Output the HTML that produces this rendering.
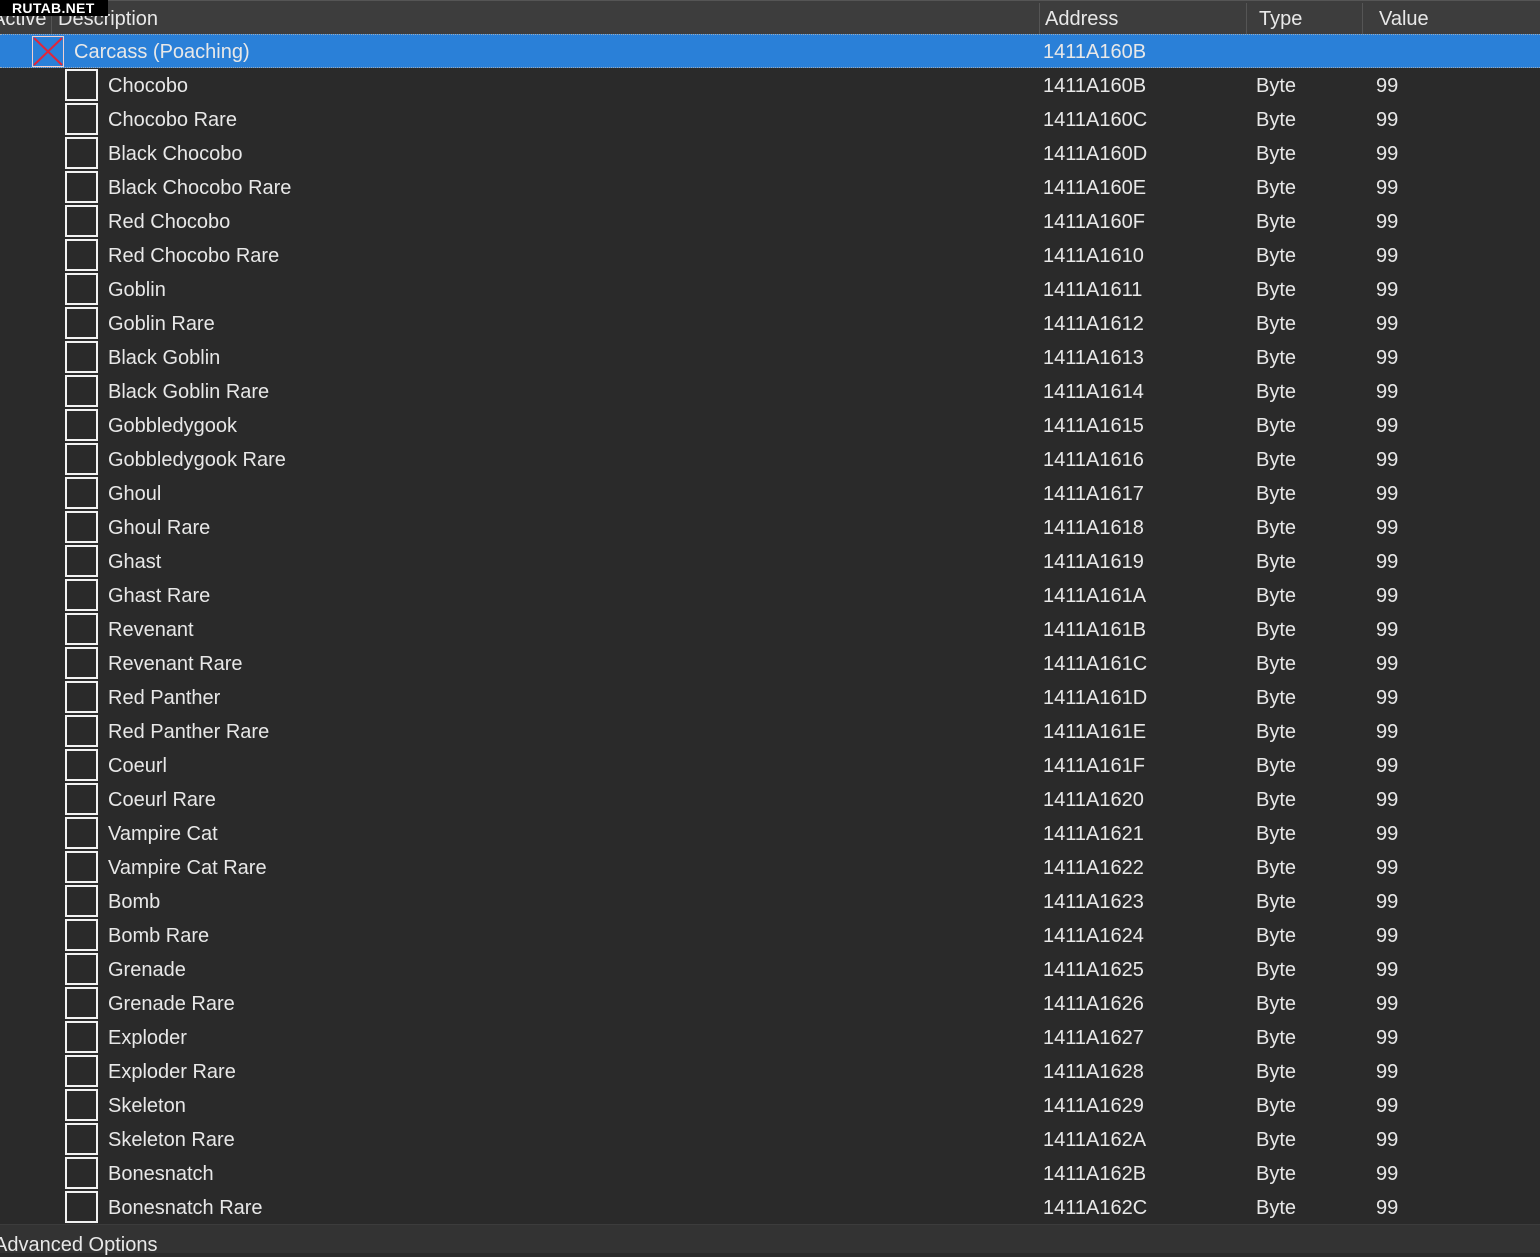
<!DOCTYPE html>
<html><head><meta charset="utf-8"><style>
*{margin:0;padding:0;box-sizing:border-box}
body{width:1540px;height:1253px;background:#2a2a2a;font-family:"Liberation Sans",sans-serif;font-size:20px;color:#e8e8e8;position:relative;overflow:hidden}
.hdr{position:absolute;left:0;top:0;width:1540px;height:34px;background:#3d3d3d;border-top:1px solid #555}
.hdr span{position:absolute;top:7px}
.sep{position:absolute;top:2px;width:1px;height:31px;background:#555}
.wm{position:absolute;left:0;top:0;width:108px;height:16px;background:#000;color:#fff;font-weight:bold;font-size:14px;line-height:16px;padding-left:12px;letter-spacing:0.3px}
.sel{position:absolute;left:0;top:34px;width:1540px;height:34px;background:#2a80d8;border-top:1px dotted #9ab;border-bottom:1px dotted #9ab}
.sel .cb{position:absolute;left:32px;top:1px;width:32px;height:31px;border:1px solid #f0d0d0}
.row{position:absolute;left:0;width:1540px;height:34px}
.cb2{position:absolute;left:65px;top:1px;width:33px;height:32px;border:2px solid #f2f2f2}
.t{position:absolute;top:7px;white-space:nowrap}
.foot{position:absolute;left:0;top:1224px;width:1540px;height:29px;background:#333;border-top:1px solid #3c3c3c}
</style></head><body>
<div class="hdr">
<span style="left:-8px">Active</span><div class="sep" style="left:51px"></div>
<span style="left:58px">Description</span>
<div class="sep" style="left:1039px"></div><span style="left:1045px">Address</span>
<div class="sep" style="left:1246px"></div><span style="left:1259px">Type</span>
<div class="sep" style="left:1362px"></div><span style="left:1379px">Value</span>
</div>
<div class="wm">RUTAB.NET</div>
<div class="sel"><div class="cb"><svg width="30" height="29" viewBox="0 0 30 29"><path d="M1 1L29 28M29 1L1 28" stroke="#e0263a" stroke-width="2"/></svg></div>
<span class="t" style="left:74px;top:6px">Carcass (Poaching)</span><span class="t" style="left:1043px;top:6px">1411A160B</span></div>
<div id="rows">
<div class="row" style="top:68px"><div class="cb2"></div><span class="t" style="left:108px">Chocobo</span><span class="t" style="left:1043px">1411A160B</span><span class="t" style="left:1256px">Byte</span><span class="t" style="left:1376px">99</span></div>
<div class="row" style="top:102px"><div class="cb2"></div><span class="t" style="left:108px">Chocobo Rare</span><span class="t" style="left:1043px">1411A160C</span><span class="t" style="left:1256px">Byte</span><span class="t" style="left:1376px">99</span></div>
<div class="row" style="top:136px"><div class="cb2"></div><span class="t" style="left:108px">Black Chocobo</span><span class="t" style="left:1043px">1411A160D</span><span class="t" style="left:1256px">Byte</span><span class="t" style="left:1376px">99</span></div>
<div class="row" style="top:170px"><div class="cb2"></div><span class="t" style="left:108px">Black Chocobo Rare</span><span class="t" style="left:1043px">1411A160E</span><span class="t" style="left:1256px">Byte</span><span class="t" style="left:1376px">99</span></div>
<div class="row" style="top:204px"><div class="cb2"></div><span class="t" style="left:108px">Red Chocobo</span><span class="t" style="left:1043px">1411A160F</span><span class="t" style="left:1256px">Byte</span><span class="t" style="left:1376px">99</span></div>
<div class="row" style="top:238px"><div class="cb2"></div><span class="t" style="left:108px">Red Chocobo Rare</span><span class="t" style="left:1043px">1411A1610</span><span class="t" style="left:1256px">Byte</span><span class="t" style="left:1376px">99</span></div>
<div class="row" style="top:272px"><div class="cb2"></div><span class="t" style="left:108px">Goblin</span><span class="t" style="left:1043px">1411A1611</span><span class="t" style="left:1256px">Byte</span><span class="t" style="left:1376px">99</span></div>
<div class="row" style="top:306px"><div class="cb2"></div><span class="t" style="left:108px">Goblin Rare</span><span class="t" style="left:1043px">1411A1612</span><span class="t" style="left:1256px">Byte</span><span class="t" style="left:1376px">99</span></div>
<div class="row" style="top:340px"><div class="cb2"></div><span class="t" style="left:108px">Black Goblin</span><span class="t" style="left:1043px">1411A1613</span><span class="t" style="left:1256px">Byte</span><span class="t" style="left:1376px">99</span></div>
<div class="row" style="top:374px"><div class="cb2"></div><span class="t" style="left:108px">Black Goblin Rare</span><span class="t" style="left:1043px">1411A1614</span><span class="t" style="left:1256px">Byte</span><span class="t" style="left:1376px">99</span></div>
<div class="row" style="top:408px"><div class="cb2"></div><span class="t" style="left:108px">Gobbledygook</span><span class="t" style="left:1043px">1411A1615</span><span class="t" style="left:1256px">Byte</span><span class="t" style="left:1376px">99</span></div>
<div class="row" style="top:442px"><div class="cb2"></div><span class="t" style="left:108px">Gobbledygook Rare</span><span class="t" style="left:1043px">1411A1616</span><span class="t" style="left:1256px">Byte</span><span class="t" style="left:1376px">99</span></div>
<div class="row" style="top:476px"><div class="cb2"></div><span class="t" style="left:108px">Ghoul</span><span class="t" style="left:1043px">1411A1617</span><span class="t" style="left:1256px">Byte</span><span class="t" style="left:1376px">99</span></div>
<div class="row" style="top:510px"><div class="cb2"></div><span class="t" style="left:108px">Ghoul Rare</span><span class="t" style="left:1043px">1411A1618</span><span class="t" style="left:1256px">Byte</span><span class="t" style="left:1376px">99</span></div>
<div class="row" style="top:544px"><div class="cb2"></div><span class="t" style="left:108px">Ghast</span><span class="t" style="left:1043px">1411A1619</span><span class="t" style="left:1256px">Byte</span><span class="t" style="left:1376px">99</span></div>
<div class="row" style="top:578px"><div class="cb2"></div><span class="t" style="left:108px">Ghast Rare</span><span class="t" style="left:1043px">1411A161A</span><span class="t" style="left:1256px">Byte</span><span class="t" style="left:1376px">99</span></div>
<div class="row" style="top:612px"><div class="cb2"></div><span class="t" style="left:108px">Revenant</span><span class="t" style="left:1043px">1411A161B</span><span class="t" style="left:1256px">Byte</span><span class="t" style="left:1376px">99</span></div>
<div class="row" style="top:646px"><div class="cb2"></div><span class="t" style="left:108px">Revenant Rare</span><span class="t" style="left:1043px">1411A161C</span><span class="t" style="left:1256px">Byte</span><span class="t" style="left:1376px">99</span></div>
<div class="row" style="top:680px"><div class="cb2"></div><span class="t" style="left:108px">Red Panther</span><span class="t" style="left:1043px">1411A161D</span><span class="t" style="left:1256px">Byte</span><span class="t" style="left:1376px">99</span></div>
<div class="row" style="top:714px"><div class="cb2"></div><span class="t" style="left:108px">Red Panther Rare</span><span class="t" style="left:1043px">1411A161E</span><span class="t" style="left:1256px">Byte</span><span class="t" style="left:1376px">99</span></div>
<div class="row" style="top:748px"><div class="cb2"></div><span class="t" style="left:108px">Coeurl</span><span class="t" style="left:1043px">1411A161F</span><span class="t" style="left:1256px">Byte</span><span class="t" style="left:1376px">99</span></div>
<div class="row" style="top:782px"><div class="cb2"></div><span class="t" style="left:108px">Coeurl Rare</span><span class="t" style="left:1043px">1411A1620</span><span class="t" style="left:1256px">Byte</span><span class="t" style="left:1376px">99</span></div>
<div class="row" style="top:816px"><div class="cb2"></div><span class="t" style="left:108px">Vampire Cat</span><span class="t" style="left:1043px">1411A1621</span><span class="t" style="left:1256px">Byte</span><span class="t" style="left:1376px">99</span></div>
<div class="row" style="top:850px"><div class="cb2"></div><span class="t" style="left:108px">Vampire Cat Rare</span><span class="t" style="left:1043px">1411A1622</span><span class="t" style="left:1256px">Byte</span><span class="t" style="left:1376px">99</span></div>
<div class="row" style="top:884px"><div class="cb2"></div><span class="t" style="left:108px">Bomb</span><span class="t" style="left:1043px">1411A1623</span><span class="t" style="left:1256px">Byte</span><span class="t" style="left:1376px">99</span></div>
<div class="row" style="top:918px"><div class="cb2"></div><span class="t" style="left:108px">Bomb Rare</span><span class="t" style="left:1043px">1411A1624</span><span class="t" style="left:1256px">Byte</span><span class="t" style="left:1376px">99</span></div>
<div class="row" style="top:952px"><div class="cb2"></div><span class="t" style="left:108px">Grenade</span><span class="t" style="left:1043px">1411A1625</span><span class="t" style="left:1256px">Byte</span><span class="t" style="left:1376px">99</span></div>
<div class="row" style="top:986px"><div class="cb2"></div><span class="t" style="left:108px">Grenade Rare</span><span class="t" style="left:1043px">1411A1626</span><span class="t" style="left:1256px">Byte</span><span class="t" style="left:1376px">99</span></div>
<div class="row" style="top:1020px"><div class="cb2"></div><span class="t" style="left:108px">Exploder</span><span class="t" style="left:1043px">1411A1627</span><span class="t" style="left:1256px">Byte</span><span class="t" style="left:1376px">99</span></div>
<div class="row" style="top:1054px"><div class="cb2"></div><span class="t" style="left:108px">Exploder Rare</span><span class="t" style="left:1043px">1411A1628</span><span class="t" style="left:1256px">Byte</span><span class="t" style="left:1376px">99</span></div>
<div class="row" style="top:1088px"><div class="cb2"></div><span class="t" style="left:108px">Skeleton</span><span class="t" style="left:1043px">1411A1629</span><span class="t" style="left:1256px">Byte</span><span class="t" style="left:1376px">99</span></div>
<div class="row" style="top:1122px"><div class="cb2"></div><span class="t" style="left:108px">Skeleton Rare</span><span class="t" style="left:1043px">1411A162A</span><span class="t" style="left:1256px">Byte</span><span class="t" style="left:1376px">99</span></div>
<div class="row" style="top:1156px"><div class="cb2"></div><span class="t" style="left:108px">Bonesnatch</span><span class="t" style="left:1043px">1411A162B</span><span class="t" style="left:1256px">Byte</span><span class="t" style="left:1376px">99</span></div>
<div class="row" style="top:1190px"><div class="cb2"></div><span class="t" style="left:108px">Bonesnatch Rare</span><span class="t" style="left:1043px">1411A162C</span><span class="t" style="left:1256px">Byte</span><span class="t" style="left:1376px">99</span></div>
</div>
<div class="foot"><span style="position:absolute;left:-6px;top:9px">Advanced Options</span></div>
</body></html>
